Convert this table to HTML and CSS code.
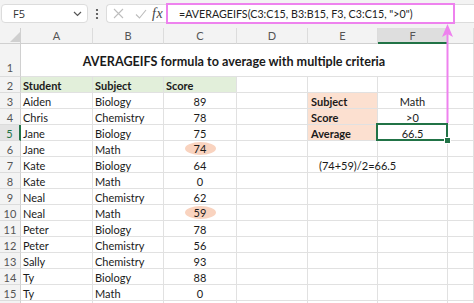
FILE: index.html
```html
<!DOCTYPE html>
<html>
<head>
<meta charset="utf-8">
<link rel="stylesheet" href="styles.css">
</head>
<body>
<div class="app">
  <div class="fbar">
    <div class="namebox">
      <span>F5</span>
      <svg class="chev" width="9" height="6" viewBox="0 0 9 6"><path d="M1 1 L4.5 4.5 L8 1" fill="none" stroke="#555" stroke-width="1.2"/></svg>
    </div>
    <svg class="dots" width="4" height="12" viewBox="0 0 4 12"><circle cx="2" cy="2" r="1.1" fill="#444"/><circle cx="2" cy="6" r="1.1" fill="#444"/><circle cx="2" cy="10" r="1.1" fill="#444"/></svg>
    <div class="fxbox">
      <svg class="ico" width="11" height="11" viewBox="0 0 11 11"><path d="M1 1 L10 10 M10 1 L1 10" stroke="#bdbdbd" stroke-width="1.1"/></svg>
      <svg class="ico chk" width="12" height="10" viewBox="0 0 12 10"><path d="M1 5.5 L4.5 9 L11 1" fill="none" stroke="#bdbdbd" stroke-width="1.1"/></svg>
      <span class="fx">fx</span>
      <div class="formula">=AVERAGEIFS(C3:C15, B3:B15, F3, C3:C15, "&gt;0")</div>
    </div>
  </div>
  <div class="sheet">
    <div class="c corner"><svg width="10" height="10" viewBox="0 0 10 10"><path d="M10 0 L10 10 L0 10 Z" fill="#cfcfcf"/></svg></div>
    <div class="c h">A</div><div class="c h">B</div><div class="c h">C</div><div class="c h">D</div><div class="c h">E</div><div class="c h hs">F</div><div class="c h"></div>

    <div class="c r r1">1</div><div class="c title">AVERAGEIFS formula to average with multiple criteria</div><div class="c"></div>

    <div class="c r">2</div><div class="c g">Student</div><div class="c g">Subject</div><div class="c g">Score</div><div class="c"></div><div class="c"></div><div class="c"></div><div class="c"></div>

    <div class="c r">3</div><div class="c">Aiden</div><div class="c">Biology</div><div class="c n">89</div><div class="c"></div><div class="c p">Subject</div><div class="c n">Math</div><div class="c"></div>

    <div class="c r">4</div><div class="c">Chris</div><div class="c">Chemistry</div><div class="c n">78</div><div class="c"></div><div class="c p">Score</div><div class="c n">&gt;0</div><div class="c"></div>

    <div class="c r rs">5</div><div class="c">Jane</div><div class="c">Biology</div><div class="c n">75</div><div class="c"></div><div class="c p">Average</div><div class="c n sel">66.5</div><div class="c"></div>

    <div class="c r">6</div><div class="c">Jane</div><div class="c">Math</div><div class="c n"><span class="oval">74</span></div><div class="c"></div><div class="c"></div><div class="c"></div><div class="c"></div>

    <div class="c r">7</div><div class="c">Kate</div><div class="c">Biology</div><div class="c n">64</div><div class="c"></div><div class="c note">(74+59)/2=66.5</div><div class="c"></div><div class="c"></div>

    <div class="c r">8</div><div class="c">Kate</div><div class="c">Math</div><div class="c n">0</div><div class="c"></div><div class="c"></div><div class="c"></div><div class="c"></div>

    <div class="c r">9</div><div class="c">Neal</div><div class="c">Chemistry</div><div class="c n">62</div><div class="c"></div><div class="c"></div><div class="c"></div><div class="c"></div>

    <div class="c r">10</div><div class="c">Neal</div><div class="c">Math</div><div class="c n"><span class="oval">59</span></div><div class="c"></div><div class="c"></div><div class="c"></div><div class="c"></div>

    <div class="c r">11</div><div class="c">Peter</div><div class="c">Biology</div><div class="c n">78</div><div class="c"></div><div class="c"></div><div class="c"></div><div class="c"></div>

    <div class="c r">12</div><div class="c">Peter</div><div class="c">Chemistry</div><div class="c n">56</div><div class="c"></div><div class="c"></div><div class="c"></div><div class="c"></div>

    <div class="c r">13</div><div class="c">Sally</div><div class="c">Chemistry</div><div class="c n">93</div><div class="c"></div><div class="c"></div><div class="c"></div><div class="c"></div>

    <div class="c r">14</div><div class="c">Ty</div><div class="c">Biology</div><div class="c n">88</div><div class="c"></div><div class="c"></div><div class="c"></div><div class="c"></div>

    <div class="c r">15</div><div class="c">Ty</div><div class="c">Math</div><div class="c n">0</div><div class="c"></div><div class="c"></div><div class="c"></div><div class="c"></div>

    <div class="c r"></div><div class="c"></div><div class="c"></div><div class="c"></div><div class="c"></div><div class="c"></div><div class="c"></div><div class="c"></div>
  </div>
  <svg class="arrow" width="14" height="102" viewBox="0 0 14 102"><path d="M6.5 10 L6.5 101" stroke="#ee82ee" stroke-width="2"/><path d="M6.5 2 L12 15 L6.5 12 L1 15 Z" fill="#ee82ee"/></svg>
</div>
</body>
</html>
```

FILE: styles.css
```css
* { box-sizing: border-box; }
html, body { margin: 0; padding: 0; }
body { width: 474px; height: 303px; overflow: hidden; background: #fff; }
.app { position: relative; width: 474px; height: 303px; overflow: hidden; font-family: Lato, "Liberation Sans", sans-serif; }

.fbar { height: 28px; background: #f3f3f3; display: flex; align-items: flex-start; padding-top: 4px; padding-left: 1px; }
.namebox { width: 87px; height: 19px; background: #fff; border: 1px solid #dcdcdc; border-radius: 4px; display: flex; align-items: center; justify-content: space-between; padding: 0 5px 0 11px; font-family: "Open Sans", sans-serif; font-size: 11px; color: #333; }
.dots { margin: 4px 7px 0 7px; }
.fxbox { flex: 1; height: 19px; background: #fff; border: 1px solid #dcdcdc; border-right: none; border-radius: 4px 0 0 4px; display: flex; align-items: center; padding-left: 6px; }
.ico { display: block; }
.chk { margin-left: 11px; }
.fx { width: 12px; font-family: "Liberation Serif", serif; font-style: italic; font-size: 14px; color: #444; margin-left: 5px; letter-spacing: 0.5px; }
.formula { margin-left: 2px; width: 289px; height: 21px; border: 2px solid #ee82ee; display: flex; align-items: center; padding-left: 11px; font-family: Lato, sans-serif; font-size: 10.7px; color: #222; white-space: nowrap; }

.sheet { display: grid; grid-template-columns: 21px 72px 71px 73px 71px 70px 70px 1fr; grid-template-rows: 16px 33px repeat(15, 16px); }
.c { border-right: 1px solid #e1e1e1; border-bottom: 1px solid #e1e1e1; background: #fff; font-size: 11px; line-height: 14px; padding: 2px 2px 0; white-space: nowrap; color: #1a1a1a; position: relative; }
.h { background: #f3f3f3; border-right-color: #dcdcdc; border-bottom-color: #d0d0d0; color: #555; text-align: center; font-size: 11px; padding-top: 1px; }
.hs { background: #dedede; border-bottom: 2px solid #217346; }
.corner { background: #f3f3f3; border-bottom-color: #d0d0d0; border-right-color: #d0d0d0; padding: 4px 0 0 10px; }
.corner svg { display: block; }
.r { background: #f3f3f3; border-bottom-color: #dcdcdc; border-right-color: #d0d0d0; color: #555; text-align: center; padding: 2px 0 0; font-size: 11px; }
.r1 { display: flex; align-items: flex-end; justify-content: center; padding-bottom: 1px; }
.rs { background: #e4e4e4; border-right: 2px solid #217346; color: #217346; }
.title { grid-column: span 6; display: flex; align-items: center; justify-content: center; font-weight: bold; font-size: 12.6px; padding-top: 4px; }
.g { background: #e2efda; font-weight: bold; }
.p { background: #fce0d0; font-weight: bold; padding-left: 3px; }
.n { text-align: center; }
.oval { display: inline-block; width: 31px; height: 13px; line-height: 13px; border-radius: 50%; background: #f9d3bf; margin-top: -1px; vertical-align: top; }
.note { padding-left: 11px; overflow: visible; z-index: 1; background: transparent; }
.sel::after { content: ""; position: absolute; left: -2px; top: -2px; right: -1px; bottom: -1px; border: 2px solid #217346; }
.sel::before { content: ""; position: absolute; right: -4px; bottom: -4px; width: 5px; height: 5px; background: #217346; border: 1px solid #fff; z-index: 2; }
.arrow { position: absolute; left: 441px; top: 22px; }
```
